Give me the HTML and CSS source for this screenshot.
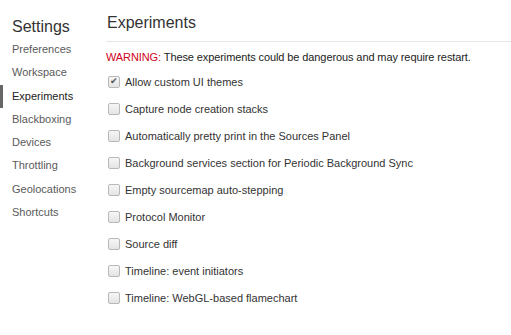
FILE: index.html
```html
<!DOCTYPE html>
<html>
    <head>
        <title>Settings</title>
        <link rel="stylesheet" href="styles.css">
    </head>
    <body>
        <div class="settings">
            <div class="sidebar">
                <div class="s_title">Settings</div>
                <ul class="tabs">
                    <li>Preferences</li>
                    <li>Workspace</li>
                    <li class="selected">Experiments</li>
                    <li>Blackboxing</li>
                    <li>Devices</li>
                    <li>Throttling</li>
                    <li>Geolocations</li>
                    <li>Shortcuts</li>
                </ul>
            </div>
            <div class="content">
                <div class="c_title">Experiments</div>
                <div class="warning"><span class="warn_word">WARNING:</span> These experiments could be dangerous and may require restart.</div>
                <ul class="experiments">
                    <li><label><input type="checkbox" checked> Allow custom UI themes</label></li>
                    <li><label><input type="checkbox"> Capture node creation stacks</label></li>
                    <li><label><input type="checkbox"> Automatically pretty print in the Sources Panel</label></li>
                    <li><label><input type="checkbox"> Background services section for Periodic Background Sync</label></li>
                    <li><label><input type="checkbox"> Empty sourcemap auto-stepping</label></li>
                    <li><label><input type="checkbox"> Protocol Monitor</label></li>
                    <li><label><input type="checkbox"> Source diff</label></li>
                    <li><label><input type="checkbox"> Timeline: event initiators</label></li>
                    <li><label><input type="checkbox"> Timeline: WebGL-based flamechart</label></li>
                </ul>
            </div>
        </div>
    </body>
</html>
```
FILE: styles.css
```css
html, body {
    margin: 0;
    padding: 0;
    background: #fff;
    font-family: 'Liberation Sans', Arial, sans-serif;
    font-size: 11px;
    color: #333;
    overflow: hidden;
}
.settings {
    display: flex;
    height: 335px;
}
.sidebar {
    width: 106px;
    flex: none;
}
.s_title {
    font-size: 16px;
    color: #333;
    padding: 18px 0 0 12px;
    height: 20px;
}
.tabs {
    list-style-type: none;
    margin: 0;
    padding: 0;
}
.tabs li {
    height: 23.3px;
    line-height: 23px;
    color: #5a5a5a;
    border-left: 3px solid transparent;
    padding-left: 9px;
}
.tabs li.selected {
    border-left-color: #666;
    color: #222;
}
.content {
    flex: 1;
}
.c_title {
    font-size: 16px;
    color: #333;
    padding: 14px 0 0 1px;
    height: 27px;
    border-bottom: 1px solid #e6e6e6;
}
.warning {
    margin-top: 9px;
    height: 15px;
    color: #222;
    letter-spacing: -0.1px;
}
.warn_word {
    color: #d0021b;
}
.experiments {
    list-style-type: none;
    margin: 3px 0 0 0;
    padding: 0;
}
.experiments li {
    height: 26.95px;
    display: flex;
    align-items: center;
}
.experiments label {
    display: flex;
    align-items: center;
    color: #333;
}
.experiments input {
    appearance: none;
    width: 12px;
    height: 12px;
    margin: 0 5px 0 2px;
    border: 1px solid #b8b8b8;
    border-radius: 2px;
    background: linear-gradient(#f6f6f6, #e4e4e4);
    box-sizing: border-box;
    position: relative;
}
.experiments input:checked::after {
    content: '\2714';
    position: absolute;
    left: 1px;
    top: -1px;
    font-size: 9px;
    color: #555;
}
```
